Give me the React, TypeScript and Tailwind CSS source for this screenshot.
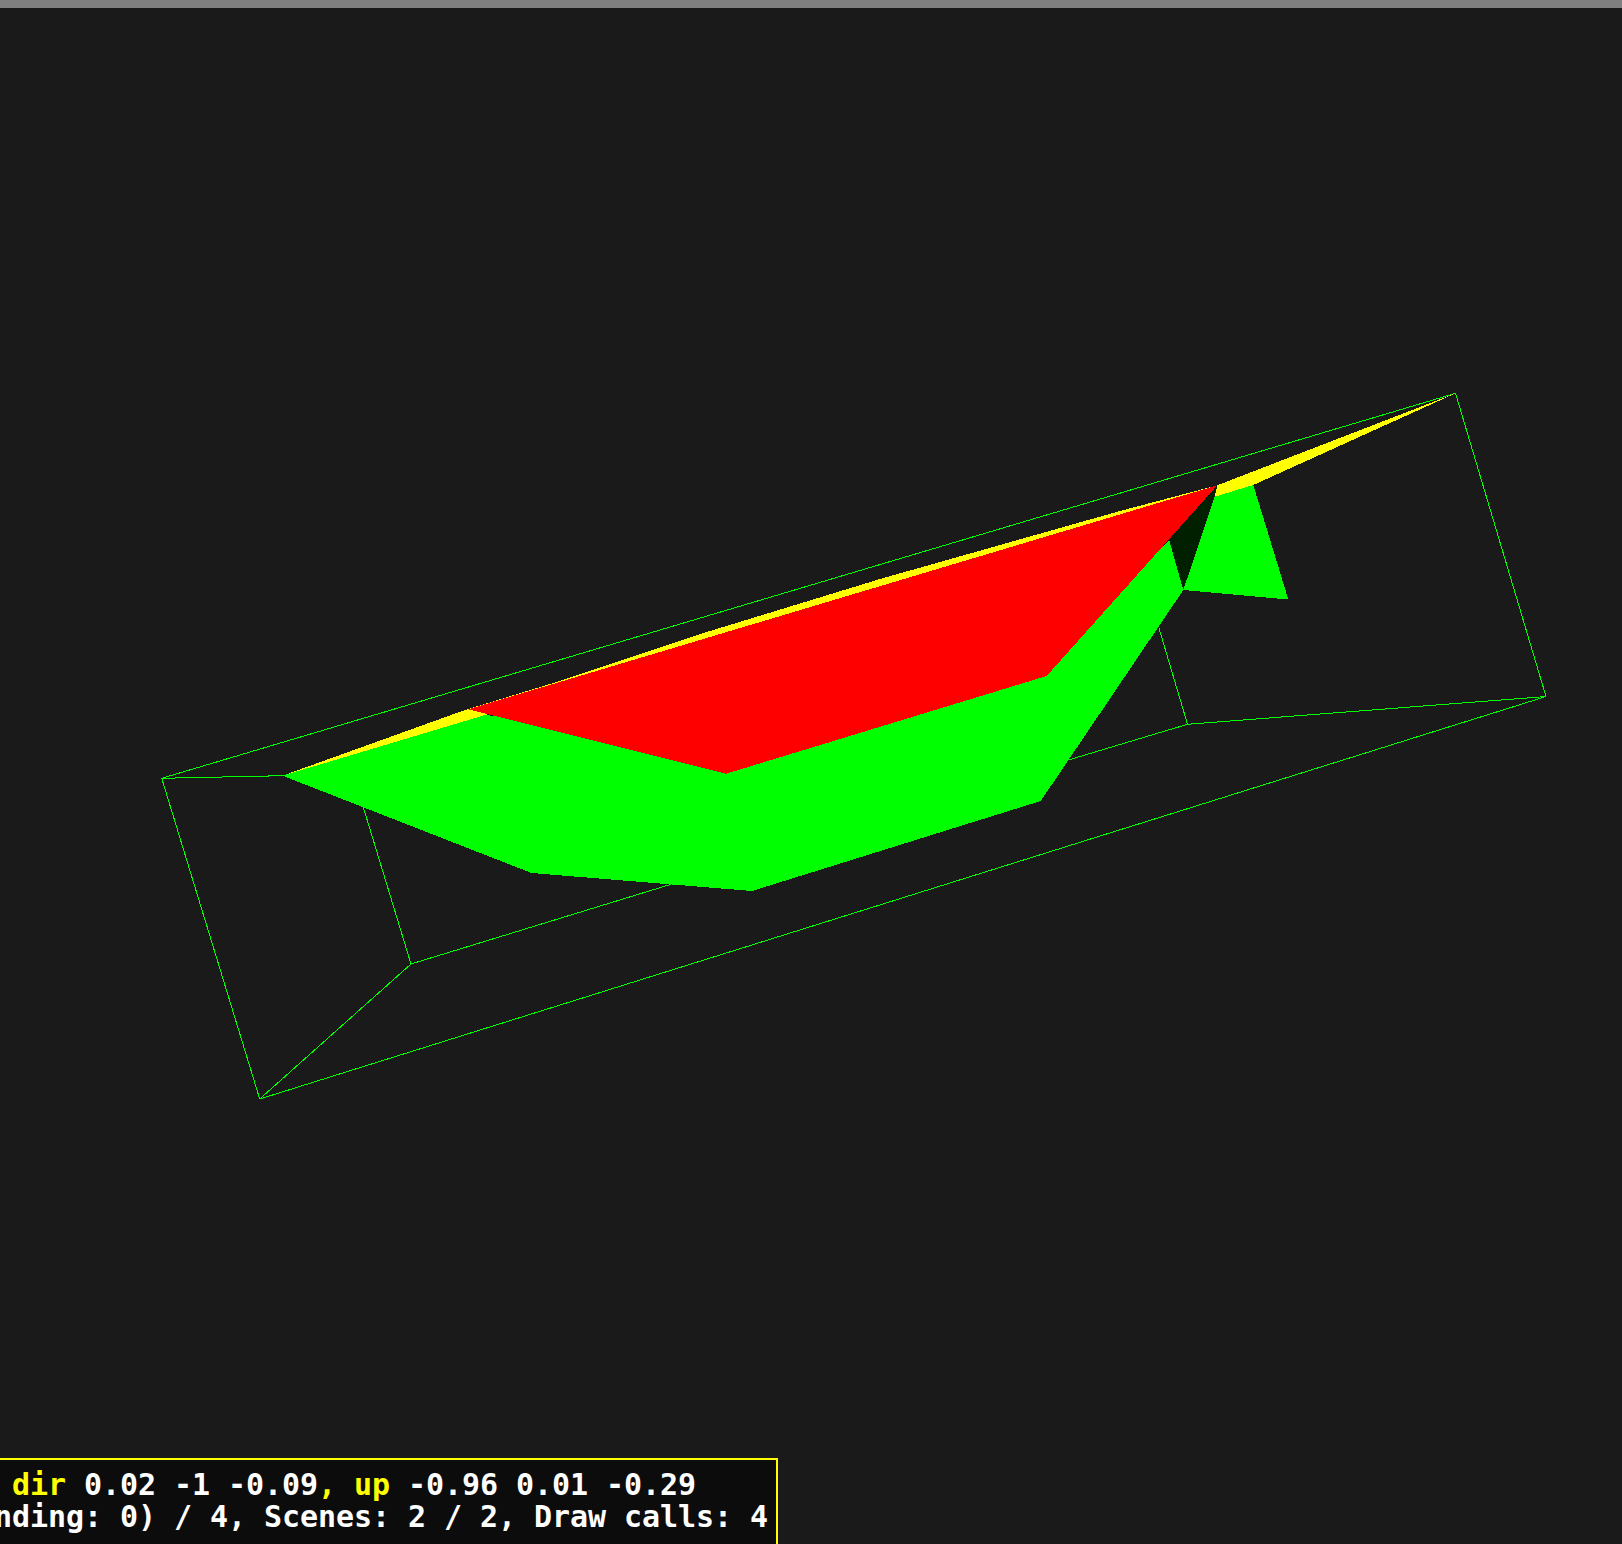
const wires = [
  [161.7, 778.3, 1455.5, 393.3],
  [1455.5, 393.3, 1546, 696.5],
  [1546, 696.5, 259.7, 1099],
  [259.7, 1099, 161.7, 778.3],
  [161.7, 778.3, 283, 775.7],
  [259.7, 1099, 411, 964],
  [363.3, 807.3, 411, 964],
  [411, 964, 671, 884.3],
  [1068.3, 760, 1187.5, 724.3],
  [1159, 628.3, 1187.5, 724.3],
  [1187.5, 724.3, 1546, 696.5],
];

const faces = [
  { color: "#ffff00", points: "282.5,775.7 465,710 550,684 710,631 800,603.5 880,579 1120,511 1217.3,485.3 1455.5,393.3 1253.3,485 1214.7,496.7 1217.3,485.3 1200,495 700,660 485,715 400,760" },
  { color: "#00ff00", points: "282.5,775.7 485,715 726,740 1040,665 1169.3,540.7 1183.3,590 1040.7,801 752,891 531.5,873" },
  { color: "#00ff00", points: "1214.7,496.7 1253.3,485 1288.3,599.5 1183.3,590" },
  { color: "#002000", points: "1217.3,485.3 1169.3,540.7 1183.3,590" },
  { color: "#ff0000", points: "1217.3,485.3 1046.7,676 726.2,773.7 468.3,709.3" },
];

function Scene() {
  return (
    <svg width="1622" height="1536" viewBox="0 8 1622 1536" shapeRendering="crispEdges" className="block">
      {wires.map(([x1, y1, x2, y2], i) => (
        <line key={i} x1={x1} y1={y1} x2={x2} y2={y2} stroke="#00ff00" strokeWidth="1" />
      ))}
      {faces.map((face, i) => (
        <polygon key={i} points={face.points} fill={face.color} />
      ))}
    </svg>
  );
}

function Stats() {
  return (
    <div className="absolute bottom-[-3px] left-[-12px] border-2 border-[#ffff00] bg-[#0c0c0c] pt-[9px] pb-3 pl-1 pr-2 font-['DejaVu_Sans_Mono',monospace] text-[30px] leading-[32px] font-bold tracking-[-0.06px] whitespace-pre text-white">
      <div>
        {" "}
        <span className="text-[#ffff00]">dir</span> 0.02 -1 -0.09<span className="text-[#ffff00]">, up</span> -0.96 0.01 -0.29
      </div>
      <div>nding: 0) / 4, Scenes: 2 / 2, Draw calls: 4</div>
    </div>
  );
}

export default function App() {
  return (
    <div className="flex h-[1544px] w-[1622px] flex-col overflow-hidden bg-[#1a1a1a]">
      <div className="h-2 bg-[#808080]" />
      <div className="relative flex-1">
        <Scene />
        <Stats />
      </div>
    </div>
  );
}
